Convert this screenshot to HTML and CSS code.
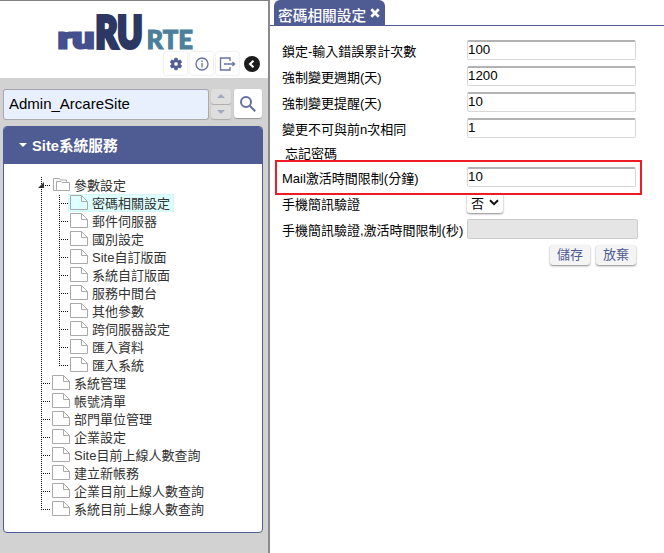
FILE: index.html
```html
<!DOCTYPE html>
<html lang="zh-Hant">
<head>
<meta charset="utf-8">
<title>Site系統服務</title>
<link rel="stylesheet" href="styles.css">
</head>
<body>
<svg class="defs" aria-hidden="true">
  <symbol id="file" viewBox="0 0 18 15"><path d="M.5.5h11l6 6v8H.5z" fill="var(--paper, #fff)" stroke="#aaa"/><path d="M11.5.5v6h6" fill="none" stroke="#aaa"/></symbol>
</svg>
<div class="app">
  <aside class="side">
    <header class="brand">
      <svg class="logo" width="140" height="38" viewBox="0 0 140 38">
        <g class="logo-text">
          <text x="2" y="34" font-size="29" textLength="36" lengthAdjust="spacingAndGlyphs" fill="#43508d" stroke="#43508d" stroke-width="3">ru</text>
          <text x="39.500" y="33.500" font-size="43" textLength="47" lengthAdjust="spacingAndGlyphs" fill="#2c3763" stroke="#2c3763" stroke-width="4">RU</text>
          <text x="90.500" y="35" font-size="27" textLength="46.500" lengthAdjust="spacingAndGlyphs" fill="#4c7f9b" stroke="#4c7f9b" stroke-width="1">RTE</text>
        </g>
      </svg>
      <nav class="tools">
        <button class="tool"><svg width="14" height="14" viewBox="0 0 24 24" fill="#4f5b93"><path d="M19.4 13a7.5 7.5 0 0 0 0-2l2.5-1.9-2.4-4.2-3 1.2a8 8 0 0 0-1.7-1L14.400 2H9.600l-.4 3.100a8 8 0 0 0-1.700 1l-3-1.200-2.400 4.200L4.600 11a7.500 7.500 0 0 0 0 2l-2.500 1.900 2.400 4.200 3-1.200a8 8 0 0 0 1.700 1l.4 3.100h4.800l.4-3.100a8 8 0 0 0 1.700-1l3 1.200 2.400-4.200zM12 15.700a3.700 3.700 0 1 1 0-7.400 3.700 3.700 0 0 1 0 7.400z" stroke="#4f5b93"/></svg></button>
        <button class="tool"><svg width="14" height="14" viewBox="0 0 14 14" fill="none" stroke="#6570a2" stroke-width="1.3"><circle cx="7" cy="7" r="6"/><path d="M7 6v4.500M7 3.500v1.400"/></svg></button>
        <button class="tool"><svg width="17" height="14" viewBox="0 0 17 14" fill="none" stroke="#6570a2" stroke-width="1.300"><path d="M11 4V1H1.500v12H11v-3M5 7h10.500M13.500 5l2 2-2 2"/></svg></button>
        <button class="back"><svg width="16" height="16" viewBox="0 0 16 16"><circle cx="8" cy="8" r="8" fill="#1c1c1c"/><path d="M9.500 4.700 6 8l3.500 3.300" fill="none" stroke="#fff" stroke-width="2"/></svg></button>
      </nav>
    </header>
    <div class="search">
      <input class="query" value="Admin_ArcareSite">
      <div class="steps"><button class="step"><i class="up"></i></button><button class="step"><i class="down"></i></button></div>
      <button class="find"><svg width="18" height="18" viewBox="0 0 18 18" fill="none" stroke="#6470a4" stroke-width="2"><circle cx="7" cy="7" r="5"/><path d="m10.800 10.800 5.400 5.400"/></svg></button>
    </div>
    <section class="panel">
      <h2 class="panel-head"><i class="caret"></i>Site系統服務</h2>
      <ul class="tree">
        <li><div class="node open"><svg class="fold" width="6" height="6"><path d="M6 0v6H0z" fill="#333"/></svg><svg class="folder" width="17" height="14" viewBox="0 0 17 14" fill="#fff" stroke="#aaa"><path d="M.5 12.500V.5h6l1 1.500h6v2"/><path d="M3.500 3.500h4.500l1 1h7.500v8H3.500z"/><path d="M.5 12.500h3"/></svg><span class="name">參數設定</span></div>
          <ul class="branch">
            <li class="node"><a class="leaf active"><svg class="file"><use href="#file"/></svg>密碼相關設定</a></li>
            <li class="node"><a class="leaf"><svg class="file"><use href="#file"/></svg>郵件伺服器</a></li>
            <li class="node"><a class="leaf"><svg class="file"><use href="#file"/></svg>國別設定</a></li>
            <li class="node"><a class="leaf"><svg class="file"><use href="#file"/></svg>Site自訂版面</a></li>
            <li class="node"><a class="leaf"><svg class="file"><use href="#file"/></svg>系統自訂版面</a></li>
            <li class="node"><a class="leaf"><svg class="file"><use href="#file"/></svg>服務中間台</a></li>
            <li class="node"><a class="leaf"><svg class="file"><use href="#file"/></svg>其他參數</a></li>
            <li class="node"><a class="leaf"><svg class="file"><use href="#file"/></svg>跨伺服器設定</a></li>
            <li class="node"><a class="leaf"><svg class="file"><use href="#file"/></svg>匯入資料</a></li>
            <li class="node"><a class="leaf"><svg class="file"><use href="#file"/></svg>匯入系統</a></li>
          </ul>
        </li>
        <li class="node"><a class="leaf"><svg class="file"><use href="#file"/></svg>系統管理</a></li>
        <li class="node"><a class="leaf"><svg class="file"><use href="#file"/></svg>帳號清單</a></li>
        <li class="node"><a class="leaf"><svg class="file"><use href="#file"/></svg>部門單位管理</a></li>
        <li class="node"><a class="leaf"><svg class="file"><use href="#file"/></svg>企業設定</a></li>
        <li class="node"><a class="leaf"><svg class="file"><use href="#file"/></svg>Site目前上線人數查詢</a></li>
        <li class="node"><a class="leaf"><svg class="file"><use href="#file"/></svg>建立新帳務</a></li>
        <li class="node"><a class="leaf"><svg class="file"><use href="#file"/></svg>企業目前上線人數查詢</a></li>
        <li class="node"><a class="leaf"><svg class="file"><use href="#file"/></svg>系統目前上線人數查詢</a></li>
      </ul>
    </section>
  </aside>
  <main class="main">
    <div class="tabs"><div class="tab">密碼相關設定<svg width="10" height="10" viewBox="0 0 10 10"><path d="m1.300 1.300 7.400 7.400M8.700 1.300 1.300 8.700" stroke="#fff" stroke-width="2.700"/></svg></div></div>
    <form class="form">
      <div class="row"><label>鎖定-輸入錯誤累計次數</label><input class="field" value="100"></div>
      <div class="row"><label>強制變更週期(天)</label><input class="field" value="1200"></div>
      <div class="row"><label>強制變更提醒(天)</label><input class="field" value="10"></div>
      <div class="row"><label>變更不可與前n次相同</label><input class="field" value="1"></div>
      <div class="row legend">忘記密碼</div>
      <div class="row marked"><label>Mail激活時間限制(分鐘)</label><input class="field" value="10"></div>
      <div class="row"><label>手機簡訊驗證</label><button type="button" class="choice">否<svg width="10" height="7" viewBox="0 0 10 7"><path d="m1 1.300 4 3.900 4-3.900" fill="none" stroke="#111" stroke-width="2"/></svg></button></div>
      <div class="row"><label>手機簡訊驗證,激活時間限制(秒)</label><input class="field off" disabled></div>
      <div class="actions"><button type="button" class="btn">儲存</button><button type="button" class="btn">放棄</button></div>
    </form>
  </main>
</div>
</body>
</html>
```
FILE: styles.css
```css
*, *::before, *::after { box-sizing: border-box; }
body { margin: 0; height: 553px; overflow: hidden; background: #fff; color: #000; font: 13px "Liberation Sans", "Noto Sans CJK TC", sans-serif; }
ul { margin: 0; padding: 0; list-style: none; }
button, input { font: inherit; margin: 0; border: 0; padding: 0; }
.defs { display: none; }
.app { display: flex; height: 553px; }

.side { width: 270px; flex: none; background: #d2d2d2; border-top: 1px solid #808080; border-right: 2px solid #8a8a8a; }
.brand { height: 77px; padding-top: 13px; background: #fff; }
.logo { display: block; margin-left: 56px; overflow: visible; }
.logo-text { font-family: Lato, sans-serif; font-weight: 900; }
.tools { display: flex; gap: 3px; justify-content: flex-end; align-items: center; padding-right: 8px; }
.tool { display: grid; place-items: center; width: 23px; height: 23px; background: #fff; border-radius: 2px; box-shadow: 0 0 2px #ccc; }
.back { display: grid; margin-left: 2px; background: none; }

.search { display: flex; padding: 11px 0 0 3px; height: 48px; }
.query { width: 206px; height: 31px; padding: 0 5px 2px; background: #e8f0fe; border: 1px solid #aaa; border-top-color: #a5a1b0; border-radius: 3px; font-size: 15px; }
.steps { display: grid; gap: 1px; width: 20px; height: 30px; margin-left: 2px; }
.step { display: grid; place-items: center; background: #dedede; border-radius: 3px; box-shadow: 0 1px 1px #aaa; }
.up, .down { width: 0; border: 4px solid transparent; border-top-width: 0; border-bottom: 4px solid #a4a8bd; }
.down { border-bottom-width: 0; border-top: 4px solid #a4a8bd; }
.find { display: grid; place-items: center; width: 28px; height: 29px; margin-left: 3px; background: #fff; border-radius: 3px; box-shadow: 0 1px 1px #999; }

.panel { width: 260px; height: 407px; margin-left: 3px; background: #fff; border: 1px solid #4f5b93; border-radius: 4px; overflow: hidden; }
.panel-head { display: flex; align-items: center; height: 37px; margin: 0; padding: 0 0 2px 15px; background: #4f5b93; color: #fff; font-size: 14.7px; }
.caret { margin-right: 5px; border: 4px solid transparent; border-top-color: #fff; border-bottom-width: 0; }
.tree, .branch { background: repeating-linear-gradient(#111 0 1px, transparent 1px 2px) no-repeat 0 1px / 1px calc(100% - 10px); }
.tree { margin: 12px 0 0 37px; color: #333; }
.branch { margin-left: 18px; }
.node { display: flex; align-items: center; height: 18px; white-space: nowrap; }
.node::before { content: ""; width: 9px; height: 1px; background: repeating-linear-gradient(90deg, #111 0 1px, transparent 1px 2px); }
.open { position: relative; }
.fold { position: absolute; left: -3px; top: 6px; }
.folder { margin-left: 3px; }
.name { margin: -1px 0 0 4px; }
.leaf { display: flex; align-items: center; gap: 4px; height: 18px; padding: 0 4px 1px 1px; margin-left: 1px; }
.file { width: 18px; height: 15px; }
.active { --paper: #dff; margin-left: 0; padding-left: 2px; background: #dff; border-radius: 2px; box-shadow: inset 0 0 1px #8bb; }

.main { flex: 1; }
.tabs { height: 26px; padding-left: 4px; border-bottom: 1px solid #4f5b93; }
.tab { display: flex; align-items: center; gap: 4px; width: 111px; height: 25px; padding: 3px 0 0 4px; background: #4f5b93; border-radius: 6px 6px 0 0; color: #fff; font-size: 14.7px; font-weight: 500; white-space: nowrap; }
.tab svg { flex: none; margin-top: -2px; }
.form { padding: 11px 0 0 12px; }
.row { display: flex; align-items: center; height: 26px; white-space: nowrap; }
.row label { width: 185px; flex: none; margin-top: 1px; }
.field { width: 169px; height: 20px; padding: 0 0 3px; border: 1px solid #d8d8d8; border-top: 2px solid #b2b2b2; border-radius: 2px; font-size: 13.3px; background: #fff; }
.off { width: 171px; margin-top: -1px; background: #e5e5e5; border: 1px solid #ccc; }
.legend { height: 23px; padding: 0 0 0 3px; }
.marked { position: relative; }
.marked::after { content: ""; position: absolute; left: -7px; top: -4px; width: 367px; height: 35px; border: 2px solid #ed1c24; }
.choice { display: flex; align-items: center; justify-content: space-between; width: 36px; height: 20px; margin-top: 0; padding: 0 4px 2px; background: #fff; border-radius: 3px; box-shadow: 0 1px 2px #888; color: #000; }
.actions { display: flex; gap: 6px; padding: 3px 0 0 268px; }
.btn { width: 40px; height: 20px; background: #f4f4f4; border-radius: 3px; box-shadow: 0 1px 2px #888; color: #4f5b93; line-height: 20px; }
```
